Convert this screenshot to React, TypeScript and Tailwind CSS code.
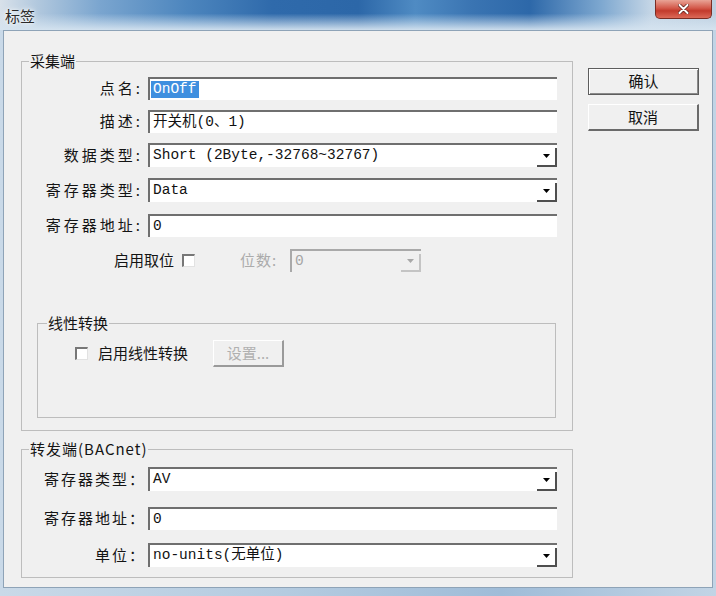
import type { ReactNode } from 'react';

const mono = "font-['Liberation_Mono','Noto_Sans_CJK_SC',monospace] text-[14.5px] text-[#111]";

function Arrow({ disabled }: { disabled?: boolean }) {
  return (
    <div
      className={`self-stretch w-[20px] mt-[3px] flex items-center justify-center border-r-2 border-b-2 ${
        disabled ? 'border-r-[#c4c4c4] border-b-[#c4c4c4]' : 'border-r-[#4f4f4f] border-b-[#4f4f4f]'
      }`}
    >
      <svg width="7" height="4" viewBox="0 0 7 4" className="-mt-[2px]">
        <path d="M0 0h7L3.5 4z" fill={disabled ? '#a8a8a8' : '#000'} />
      </svg>
    </div>
  );
}

function Field({ children, select, h = 'h-[23px]' }: { children?: ReactNode; select?: boolean; h?: string }) {
  return (
    <div
      className={`flex items-center ${h} w-[409px] ml-[2px] bg-white border-t-2 border-l-2 border-t-[#6f6f6f] border-l-[#6f6f6f] pl-[3px] ${mono}`}
    >
      <div className="flex-1 flex items-center whitespace-pre">{children}</div>
      {select && <Arrow />}
    </div>
  );
}

// group 1 labels use a half-width colon, group 2 a full-width one
function Label({ children, wide }: { children: ReactNode; wide?: boolean }) {
  return (
    <span
      className={`w-[124px] text-right text-[15px] text-[#141414] whitespace-nowrap ${
        wide ? 'tracking-[2px]' : 'tracking-[3px] pr-[3px]'
      }`}
    >
      {children}
    </span>
  );
}

export default function App() {
  return (
    <div className="w-[716px] h-[596px] flex flex-col bg-[linear-gradient(90deg,#c9d9e8,#b4cbe0_40%,#9fbcd8_70%,#c2d4e5)] font-['Noto_Sans_CJK_SC','Noto_Sans',sans-serif] overflow-hidden">
      {/* title bar */}
      <div className="h-[30px] flex items-start bg-[linear-gradient(180deg,rgba(255,255,255,0)_45%,rgba(214,228,240,0.95)_100%),linear-gradient(90deg,#d8e1ea_0%,#b3c9de_5%,#7aa5cf_14%,#4d86be_26%,#2f6aab_38%,#2c67a8_50%,#4f8bc3_58%,#3a74b2_66%,#2d68a9_74%,#7ea8d0_84%,#c5d6e6_91%,#bccfe0_100%)]">
        <span className="ml-[5px] mt-[5px] text-[15px] text-[#2a2a2a] [text-shadow:0_0_6px_#fff,0_0_3px_#fff]">标签</span>
        <div className="flex-1" />
        <div className="mr-[4px] w-[57px] h-[19px] rounded-b-[5px] border border-t-0 border-[#7a2d24] bg-[linear-gradient(180deg,#e9a496_0%,#d3594a_45%,#c23a2c_60%,#dc6a58_100%)] flex items-center justify-center">
          <svg width="11" height="10" viewBox="0 0 11 10">
            <path d="M1.5 1l8 8M9.5 1l-8 8" stroke="#5a1a14" strokeWidth="3.4" strokeLinecap="round" />
            <path d="M1.5 1l8 8M9.5 1l-8 8" stroke="#fff" strokeWidth="2" strokeLinecap="round" />
          </svg>
        </div>
      </div>

      {/* client area */}
      <div className="mx-[3px] h-[558px] border border-[#8ea3b7] bg-[#f0f0f0] flex pl-[17px] pt-[21px]">
        <div className="w-[552px] flex flex-col">
          {/* 采集端 */}
          <fieldset className="w-[552px] h-[379px] border border-[#bdbdbd] flex flex-col">
            <legend className="ml-[7px] px-[1px] text-[15px] leading-[18px] text-[#141414]">采集端</legend>
            <div className="pt-[7px] flex flex-col">
              <div className="flex items-center">
                <Label>点名:</Label>
                <Field>
                  <span className="-ml-[2px] px-[2px] bg-[#3f8fdf] text-white leading-[17px]">OnOff</span>
                </Field>
              </div>
              <div className="flex items-center mt-[10px]">
                <Label>描述:</Label>
                <Field>开关机(0、1)</Field>
              </div>
              <div className="flex items-center mt-[10px]">
                <Label>数据类型:</Label>
                <Field select h="h-[24px]">Short (2Byte,-32768~32767)</Field>
              </div>
              <div className="flex items-center mt-[11px]">
                <Label>寄存器类型:</Label>
                <Field select h="h-[24px]">Data</Field>
              </div>
              <div className="flex items-center mt-[12px]">
                <Label>寄存器地址:</Label>
                <Field>0</Field>
              </div>
              <div className="flex items-center mt-[12px] h-[23px]">
                <span className="w-[152px] text-right text-[15px] text-[#141414]">启用取位</span>
                <span className="ml-[8px] w-[13px] h-[13px] bg-white border-t-2 border-l-2 border-t-[#777] border-l-[#777] border-r border-b border-r-[#e2e2e2] border-b-[#e2e2e2]" />
                <span className="ml-[45px] w-[50px] text-[15px] tracking-[1px] text-[#ababab]">位数:</span>
                <div className={`flex items-center h-[23px] w-[131px] bg-[#f0f0f0] border-t-2 border-l-2 border-t-[#a9a9a9] border-l-[#a9a9a9] pl-[3px] ${mono}`}>
                  <span className="flex-1 text-[#a5a5a5]">0</span>
                  <Arrow disabled />
                </div>
              </div>

              {/* 线性转换 */}
              <fieldset className="ml-[15px] mt-[42px] w-[519px] h-[104px] border border-[#bdbdbd]">
                <legend className="ml-[9px] px-[1px] text-[15px] leading-[18px] text-[#141414]">线性转换</legend>
                <div className="pt-[8px] flex items-center h-[35px]">
                  <span className="ml-[37px] w-[13px] h-[13px] bg-white border-t-2 border-l-2 border-t-[#777] border-l-[#777] border-r border-b border-r-[#e2e2e2] border-b-[#e2e2e2]" />
                  <span className="ml-[10px] w-[115px] text-[15px] text-[#141414]">启用线性转换</span>
                  <div className="w-[71px] h-[27px] flex items-center justify-center bg-[#f0f0f0] border-t border-l border-t-white border-l-white border-r-2 border-b-2 border-r-[#9a9a9a] border-b-[#9a9a9a] text-[15px] text-[#b0b0b0]">
                    设置...
                  </div>
                </div>
              </fieldset>
            </div>
          </fieldset>

          {/* 转发端 */}
          <fieldset className="mt-[9px] w-[552px] h-[138px] border border-[#bdbdbd]">
            <legend className="ml-[7px] px-[1px] text-[15px] leading-[18px] text-[#141414] tracking-[1px]">转发端(BACnet)</legend>
            <div className="pt-[9px] flex flex-col">
              <div className="flex items-center">
                <Label wide>寄存器类型：</Label>
                <Field select h="h-[24px]">AV</Field>
              </div>
              <div className="flex items-center mt-[16px]">
                <Label wide>寄存器地址：</Label>
                <Field>0</Field>
              </div>
              <div className="flex items-center mt-[13px]">
                <Label wide>单位：</Label>
                <Field select h="h-[24px]">no-units(无单位)</Field>
              </div>
            </div>
          </fieldset>
        </div>

        {/* buttons */}
        <div className="ml-[15px] mt-[16px] flex flex-col gap-[9px]">
          <button className="w-[111px] h-[27px] bg-[#f0f0f0] border border-[#5e5e5e] shadow-[inset_1px_1px_0_#fff,inset_-1px_-1px_0_#8a8a8a] text-[15px] text-[#141414]">
            确认
          </button>
          <button className="w-[111px] h-[27px] bg-[#f0f0f0] border-t border-l border-t-white border-l-white border-r-2 border-b-2 border-r-[#6a6a6a] border-b-[#6a6a6a] text-[15px] text-[#141414]">
            取消
          </button>
        </div>
      </div>
    </div>
  );
}
